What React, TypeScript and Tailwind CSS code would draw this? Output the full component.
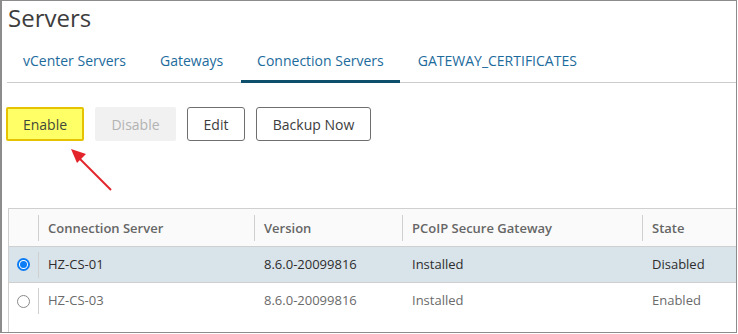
import { useState } from "react";

const tabs = ["vCenter Servers", "Gateways", "Connection Servers", "GATEWAY_CERTIFICATES"];

const rows = [
  { name: "HZ-CS-01", version: "8.6.0-20099816", pcoip: "Installed", state: "Disabled" },
  { name: "HZ-CS-03", version: "8.6.0-20099816", pcoip: "Installed", state: "Enabled" },
];

function Arrow() {
  return (
    <svg className="absolute left-[60px] top-[140px]" width="60" height="60" viewBox="0 0 60 60">
      <line x1="49" y1="49" x2="14" y2="14" stroke="#e3242b" strokeWidth="2" />
      <polygon points="9,8 24,13 15,22" fill="#e3242b" />
    </svg>
  );
}

export default function App() {
  const [selected, setSelected] = useState(0);
  const [active, setActive] = useState(2);

  return (
    <div className="relative w-[737px] h-[333px] bg-white border border-l-2 border-[#8c8c8c] overflow-hidden font-['Open_Sans',sans-serif]">
      <h1 className="pl-[6px] pt-[1px] text-[24px] leading-[32px] text-[#3d3d3d]">Servers</h1>

      <div className="ml-[5px] mt-[11px] flex gap-[2px] border-b border-[#cccccc]">
        {tabs.map((t, i) => (
          <button
            key={t}
            onClick={() => setActive(i)}
            className={`px-4 pt-[6px] pb-[9px] text-[14px] leading-[20px] text-[#1c6b9c] border-b-[3px] -mb-[1px] ${
              active === i ? "border-[#0e4f6b]" : "border-transparent"
            }`}
          >
            {t}
          </button>
        ))}
      </div>

      <div className="ml-[4px] mt-[24px] flex gap-[11px]">
        <button className="w-[78px] h-[34px] rounded-[2px] border-2 border-[#e6c200] bg-[#ffff66] text-[14px] text-[#3f4a3a]">
          Enable
        </button>
        <button className="w-[81px] h-[34px] rounded-[2px] bg-[#f1f1f1] text-[14px] text-[#b3b3b3]">Disable</button>
        <button className="w-[58px] h-[34px] rounded-[3px] border border-[#6f6f6f] text-[14px] text-[#3d3d3d]">Edit</button>
        <button className="w-[115px] h-[34px] rounded-[3px] border border-[#6f6f6f] text-[14px] text-[#3d3d3d]">
          Backup Now
        </button>
      </div>

      <Arrow />

      <div className="ml-[6px] mt-[67px] w-[760px] h-[140px] border border-[#cfcfcf] text-[13px]">
        <div className="flex h-[38px] items-center bg-[#fafafa] border-b border-[#cfcfcf] text-[#666666] font-semibold">
          <div className="w-[30px] h-[26px] border-r border-[#d0d0d0]" />
          <div className="w-[216px] h-[26px] pl-[9px] leading-[26px] border-r border-[#d0d0d0]">Connection Server</div>
          <div className="w-[148px] h-[26px] pl-[9px] leading-[26px] border-r border-[#d0d0d0]">Version</div>
          <div className="w-[240px] h-[26px] pl-[9px] leading-[26px] border-r border-[#d0d0d0]">PCoIP Secure Gateway</div>
          <div className="flex-1 h-[26px] pl-[9px] leading-[26px]">State</div>
        </div>
        {rows.map((r, i) => (
          <div
            key={r.name}
            onClick={() => setSelected(i)}
            className={`flex h-[36px] items-center ${
              i === 0 ? "border-b border-[#cfcfcf]" : ""
            } ${selected === i ? "bg-[#d9e3ea] text-[#2d2d2d]" : "text-[#6a6a6a]"}`}
          >
            <div className="w-[30px] h-[26px] flex items-center justify-center border-r border-[#d0d0d0]">
              {selected === i ? (
                <span className="w-[13px] h-[13px] rounded-full border-2 border-[#0a7cf5] bg-white flex items-center justify-center">
                  <span className="w-[7px] h-[7px] rounded-full bg-[#0a7cf5]" />
                </span>
              ) : (
                <span className="w-[13px] h-[13px] rounded-full border border-[#8a8a8a] bg-white" />
              )}
            </div>
            <div className="w-[216px] pl-[9px]">{r.name}</div>
            <div className="w-[148px] pl-[9px]">{r.version}</div>
            <div className="w-[240px] pl-[9px]">{r.pcoip}</div>
            <div className="flex-1 pl-[9px]">{r.state}</div>
          </div>
        ))}
      </div>
    </div>
  );
}
